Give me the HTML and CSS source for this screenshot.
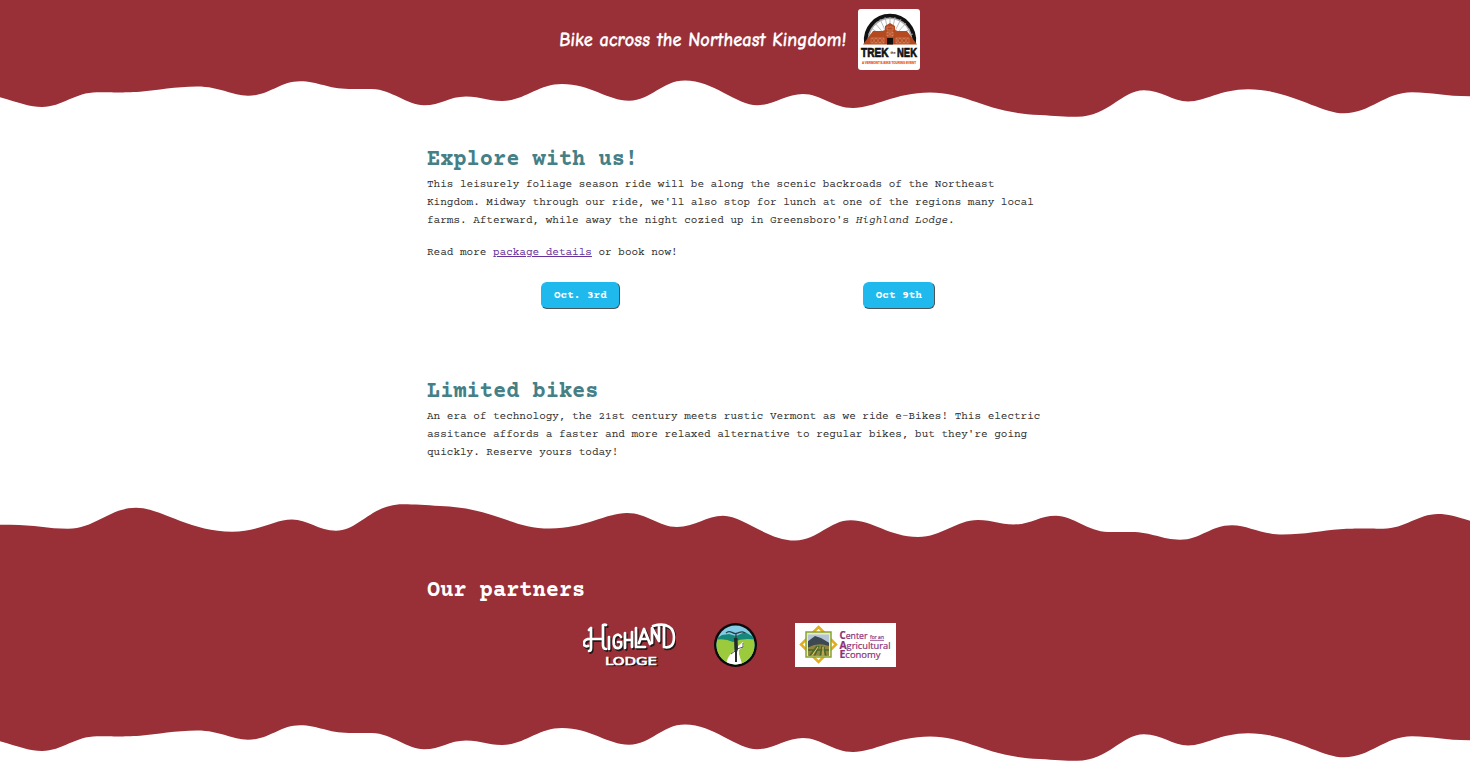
FILE: index.html
```html
<!DOCTYPE html>
<html lang="en">
<head>
<meta charset="utf-8">
<title>Trek the NEK</title>
<link rel="stylesheet" href="styles.css">
</head>
<body>
<svg class="defs" width="0" height="0" aria-hidden="true">
  <defs>
    <path id="wave" d="M0 0V17.3C20 23 30 27 42 27C62 27 75 12.3 97 12.3C115 12.3 120 12.9 140 11.8C158 10.5 175 6.6 197 6.6C220 6.6 232 15.8 248 15.8C269 15.8 280 1.3 300 1.3C318 1.3 328 9 349 9C360 9 362 8.8 372 9C392 9.5 407 25.3 424 25.3C441 25.3 449 16.5 466 16.5C482 16.5 486 21 502 21C524 21 538 4 562 4C590 4 608 20.7 629 20.7C651 20.7 662 .5 685 .5C713 .5 737 25.3 757 25.3C773 25.3 786 14 803 14C821 14 833 28 853 28C874 28 895 12.5 930 12.5C969 12.5 985 33 1040 35C1055 36 1065 36.8 1077 36.8C1109 36.8 1121 10.3 1144 10.3C1161 10.3 1173 21.5 1188 21.5C1206 21.5 1220 9.3 1248 9.3C1290 9.3 1320 33.3 1344 33.3C1370 33.3 1385 12.3 1412 12.3C1432 12.3 1445 16.3 1470 16.3H1482V0Z"/>
  </defs>
</svg>

<header class="banner">
  <svg class="tagline" width="292" height="40" viewBox="0 0 292 40"><text x="2" y="26" textLength="287" lengthAdjust="spacingAndGlyphs" transform="translate(2 0) skewX(-5)">Bike across the Northeast Kingdom!</text></svg>
  <svg class="badge" width="62" height="61" viewBox="0 0 62 61">
    <rect width="62" height="61" rx="3" fill="#fff"/>
    <path d="M11 35A21.500 21.500 0 1 1 53 35" fill="none" stroke="#aaa" stroke-width="2"/>
    <path d="M8 35A24.200 24.200 0 1 1 56 35" transform="translate(0 -1)" fill="none" stroke="#111" stroke-width="3.800"/>
    <path d="M32 32L13 19M32 32L17 14M32 32L22 10M32 32L27 8M32 32V8M32 32L37 8M32 32L43 10M32 32L48 14M32 32L52 20M32 32L10 25M32 32L55 25" stroke="#aaa" stroke-width=".8"/>
    <path d="M5 35.500L15 22H24L27 21V17L32 14L37 17V21L40 22H49L59 35.500Z" fill="#b54a20"/>
    <path d="M13 29H26V34H13ZM38 29H51V34H38ZM29 18H35V21H29ZM29 23H35V27H29Z" fill="none" stroke="#df9b78" stroke-width=".5"/>
    <path d="M14 29L18 34L22 29L26 34M14 34L18 29L22 34L26 29M38 29L42 34L46 29L50 34M38 34L42 29L46 34L50 29M29 23L35 27M35 23L29 27" fill="none" stroke="#df9b78" stroke-width=".5"/>
    <rect x="29" y="29" width="6" height="6.500" fill="#111"/>
    <text class="badge-name" x="3" y="48" textLength="27.500" lengthAdjust="spacingAndGlyphs">TREK</text>
    <text class="badge-the" x="32.500" y="44.500" textLength="5" lengthAdjust="spacingAndGlyphs">the</text>
    <text class="badge-name" x="39" y="48" textLength="20" lengthAdjust="spacingAndGlyphs">NEK</text>
    <text class="badge-sub" x="4" y="54.500" textLength="54" lengthAdjust="spacingAndGlyphs">A VERMONT E-BIKE TOURING EVENT</text>
  </svg>
</header>
<svg class="wave wave-top" viewBox="0 0 1470 40" preserveAspectRatio="none"><use href="#wave"/></svg>

<main class="content">
  <section class="explore">
    <h2>Explore with us!</h2>
    <p>This leisurely foliage season ride will be along the scenic backroads of the Northeast Kingdom. Midway through our ride, we'll also stop for lunch at one of the regions many local farms. Afterward, while away the night cozied up in Greensboro's <em>Highland Lodge</em>.</p>
    <p>Read more <a href="#package">package details</a> or book now!</p>
    <div class="dates">
      <button class="date">Oct. 3rd</button>
      <button class="date">Oct 9th</button>
    </div>
  </section>
  <section class="bikes">
    <h2>Limited bikes</h2>
    <p>An era of technology, the 21st century meets rustic Vermont as we ride e-Bikes! This electric assitance affords a faster and more relaxed alternative to regular bikes, but they're going quickly. Reserve yours today!</p>
  </section>
</main>

<svg class="wave wave-flipped" viewBox="0 0 1470 40" preserveAspectRatio="none"><use href="#wave"/></svg>
<footer class="partners">
  <div class="partners-inner">
    <h2>Our partners</h2>
    <div class="logos">
      <svg width="93" height="44" viewBox="0 0 93 44">
        <g class="lodge-letters lodge-shadow" transform="translate(1.300 1.600)"><use href="#lodge-lines"/></g>
        <g class="lodge-letters">
          <path id="lodge-lines" d="M8 5V25Q8 28 6 28M20 2V22Q20 26 23 26M8 16H20M8 16C-1 15-1 25 5 23M20 3Q21 1 23 2M6 7L8 5M26 14V26M38 14Q36 10 32 13Q30 15 31 22Q32 26 36 25Q39 24 38 19H35M42 10V25M49 9V24M42 17H49M53 5V24H62M56 20L61 6L67 21M58 16H65M69 20V5L76 18V3M70 3C84-1 91 5 91 14Q91 26 81 24M81 2V24"/>
        </g>
        <text class="lodge-sub lodge-dark" x="23.500" y="43" textLength="52" lengthAdjust="spacingAndGlyphs" aria-hidden="true">LODGE</text>
        <text class="lodge-sub" x="22" y="41.800" textLength="52" lengthAdjust="spacingAndGlyphs">LODGE</text>
      </svg>
      <svg width="43" height="44" viewBox="0 0 43 44">
        <clipPath id="disc"><ellipse cx="21.500" cy="22" rx="19" ry="19.500"/></clipPath>
        <ellipse cx="21.500" cy="22" rx="21.500" ry="22" fill="#0b0b0b"/>
        <g clip-path="url(#disc)">
          <rect width="43" height="44" fill="#82cce8"/>
          <path d="M0 17L8 12L15 11L22 13L31 9L43 16V27H0Z" fill="#168879"/>
          <path d="M0 17Q11 15 19 19Q30 14 43 17V44H0Z" fill="#9bcb3c"/>
          <path d="M11 44Q14 32 18 30L21 26L24 23L29 19L30 23L25 27L25 31L29 44Z" fill="#fff"/>
        </g>
        <path d="M12 10C16 6 18 11 22 10.500C26 10 27 7 31 10M22 10V25" fill="none" stroke="#283f45" stroke-width="1.300"/>
        <path d="M20 15H23.500L24 26L23 29H20.500ZM21 27H23V39H21Z" fill="#242b2b"/>
        <path d="M23 26L29 24L29 20M21 28L17 31" fill="none" stroke="#303838" stroke-width=".8"/>
      </svg>
      <svg width="101" height="44" viewBox="0 0 101 44">
        <clipPath id="farm"><rect x="13" y="11.500" width="21" height="21"/></clipPath>
        <rect width="101" height="44" fill="#fff"/>
        <path d="M23.500 4L41 21.500L23.500 39L6 21.500Z" fill="#fff" stroke="#e0ad23" stroke-width="2.500"/>
        <rect x="11" y="9" width="25" height="25" fill="#e8ecc5" stroke="#8aa32e" stroke-width="1.500"/>
        <g clip-path="url(#farm)">
          <rect x="12" y="10" width="24" height="12" fill="#b5c5d7"/>
          <path d="M12 19L20 13L26 15L36 21V34H12Z" fill="#3c4852"/>
          <path d="M12 25Q24 18 36 24V34H12Z" fill="#91863e"/>
          <path d="M14 34L22 23M19 34L24 23M25 34L27 23M31 34L29 24M13 27H35" stroke="#4c662b" stroke-width="1.500"/>
          <path d="M16 34L23 24M28 34L28 24" stroke="#e1c85c"/>
        </g>
        <g class="center-text">
          <text x="44.500" y="16" textLength="28" lengthAdjust="spacingAndGlyphs"><tspan class="cap">C</tspan>enter</text>
          <text class="small" x="75" y="16" textLength="14" lengthAdjust="spacingAndGlyphs">for an</text>
          <text x="44.500" y="25.500" textLength="51" lengthAdjust="spacingAndGlyphs"><tspan class="cap">A</tspan>gricultural</text>
          <text x="44.500" y="35" textLength="41" lengthAdjust="spacingAndGlyphs"><tspan class="cap">E</tspan>conomy</text>
        </g>
      </svg>
    </div>
  </div>
</footer>
<svg class="wave wave-bottom" viewBox="0 0 1470 40" preserveAspectRatio="none"><use href="#wave"/></svg>
</body>
</html>
```
FILE: styles.css
```css
* { box-sizing: border-box; }
html { overflow: hidden; }
body {
  margin: 0;
  background: #fff;
  color: #333;
  font: 11px/18px "Courier Prime", "Courier New", "Liberation Mono", monospace;
}
svg { display: block; flex: none; }
.defs { position: absolute; }
.banner {
  height: 80px;
  background: #992f37;
  display: flex;
  justify-content: center;
  padding: 9px 0 0 7px;
  gap: 9px;
}
.tagline { margin-top: 11px; overflow: visible; }
.tagline text { font: 700 20px "Comic Neue", Lato, sans-serif; fill: #fff; stroke: #fff; stroke-width: .2px; }
.badge-name { font: 700 13px "Liberation Sans", sans-serif; fill: #111; stroke: #111; stroke-width: .7px; }
.badge-the { font: 700 4px "Liberation Sans", sans-serif; fill: #222; }
.badge-sub { font: 700 4px "Liberation Sans", sans-serif; fill: #ed5a2b; stroke: #ed5a2b; stroke-width: .2px; }
.wave { width: 100%; height: 40px; fill: #992f37; overflow: visible; }
.wave-flipped { transform: translateX(10px) rotate(180deg); }
.content, .partners-inner { width: 616px; margin: 0 auto; }
.content { height: 381px; padding-top: 26px; }
h2 {
  margin: 0;
  font-size: 22px;
  line-height: 30px;
  font-weight: 700;
  color: #458087;
  transform: scaleY(1.1);
  transform-origin: 0 20px;
}
p { margin: 0 0 14px; }
a { color: #68309b; }
.dates { display: flex; gap: 243px; padding-left: 114px; margin-top: 20px; }
.date {
  height: 27px;
  padding: 0 12px;
  font: 700 11px/24px "Courier Prime", "Courier New", "Liberation Mono", monospace;
  color: #fff;
  background: #20b9ee;
  border: 1px solid #20b9ee;
  border-right-color: #48555b;
  border-bottom-color: #48555b;
  border-radius: 6px;
}
.bikes { margin-top: 69px; }
.partners { height: 183px; background: #992f37; padding-top: 36px; }
.partners h2 { color: #fff; }
.logos { display: flex; justify-content: center; gap: 38px; padding-left: 9px; margin-top: 16px; }
.lodge-letters { fill: none; stroke: #fff; stroke-width: 2.7; stroke-linecap: round; stroke-linejoin: round; }
.lodge-shadow { stroke: #201719; }
.lodge-sub { font: 400 11px "DejaVu Sans", sans-serif; fill: #fff; stroke: #fff; stroke-width: .6px; }
.lodge-dark { fill: #201719; stroke: #201719; }
.center-text { font: 9px "Open Sans", sans-serif; fill: #8c3178; stroke: #8c3178; stroke-width: .2px; }
.center-text .cap { font-weight: 700; font-size: 10px; }
.center-text .small { font-size: 6px; text-decoration: underline; }
```
